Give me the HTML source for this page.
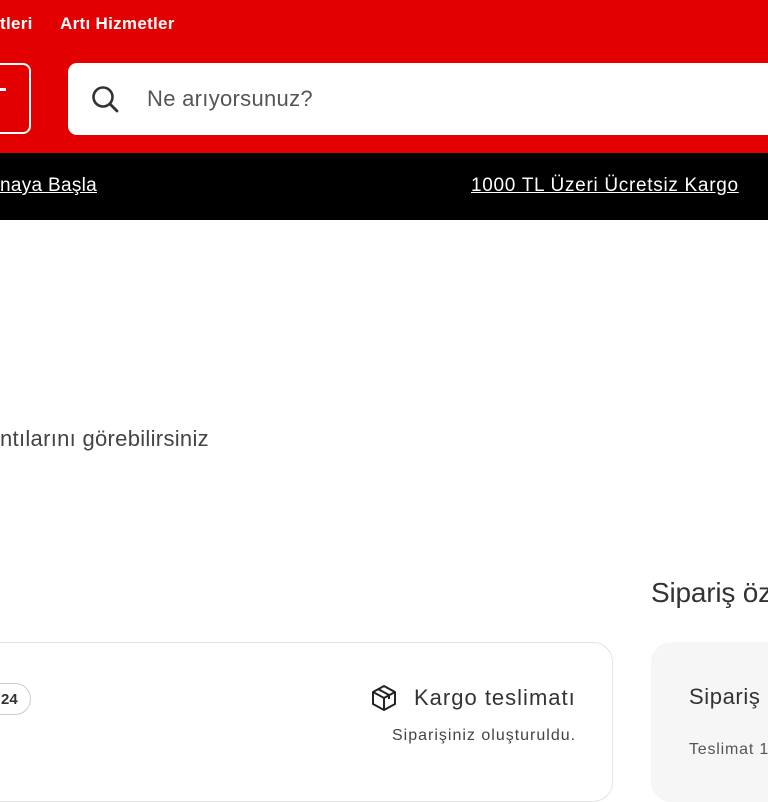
<!DOCTYPE html>
<html><head><meta charset="utf-8"><style>
*{margin:0;padding:0;box-sizing:border-box}
body{width:768px;height:768px;overflow:hidden;background:#fff;font-family:"Liberation Sans",sans-serif;position:relative}
.abs{position:absolute;white-space:nowrap}
</style></head><body>
<div class="abs" style="left:0;top:0;width:768px;height:153px;background:#e30000"></div>
<div class="abs" style="left:0;top:14px;color:#fff;font-weight:bold;font-size:17px;letter-spacing:0.3px">tleri</div>
<div class="abs" style="left:60px;top:14px;color:#fff;font-weight:bold;font-size:17px;letter-spacing:0.3px">Artı Hizmetler</div>
<div class="abs" style="left:-20px;top:63px;width:51px;height:71px;border:2px solid #fff;border-radius:8px"></div>
<div class="abs" style="left:0;top:88px;width:6px;height:3px;background:#fff"></div>
<div class="abs" style="left:68px;top:63px;width:720px;height:72px;background:#fff;border-radius:9px"></div>
<svg class="abs" style="left:89px;top:83px" width="32" height="32" viewBox="0 0 32 32"><circle cx="14" cy="14" r="9.5" fill="none" stroke="#333" stroke-width="2.6"/><path d="M21 21l7 7" stroke="#333" stroke-width="2.8" stroke-linecap="round"/></svg>
<div class="abs" style="left:147px;top:86px;color:#555;font-size:22px;letter-spacing:0.3px">Ne arıyorsunuz?</div>
<div class="abs" style="left:0;top:153px;width:768px;height:67px;background:#000"></div>
<div class="abs" style="left:0;top:175px;color:#fff;font-size:19px;text-decoration:underline;letter-spacing:0.3px">naya Başla</div>
<div class="abs" style="left:471px;top:175px;color:#fff;font-size:19px;text-decoration:underline;letter-spacing:0.7px">1000 TL Üzeri Ücretsiz Kargo</div>
<div class="abs" style="left:0;top:426px;color:#444;font-size:22px;letter-spacing:0.3px">ntılarını görebilirsiniz</div>
<div class="abs" style="left:651px;top:577px;color:#333;font-size:28px;letter-spacing:-0.2px">Sipariş öz</div>
<div class="abs" style="left:-30px;top:642px;width:643px;height:160px;border:1px solid #e3e3e3;border-radius:20px"></div>
<div class="abs" style="left:-20px;top:683px;width:51px;height:32px;border:1px solid #ccc;border-radius:16px;font-size:15px;font-weight:bold;color:#333;padding:7px 0 0 20px">24</div>
<svg class="abs" style="left:369px;top:683px" width="30" height="30" viewBox="0 0 30 30" fill="none" stroke="#222" stroke-width="2" stroke-linejoin="round"><path d="M15 3L26 9v12l-11 6-11-6V9z"/><path d="M4 9l11 6 11-6M15 15v12M9 6l11 6v4"/></svg>
<div class="abs" style="left:414px;top:685px;color:#333;font-size:22px;letter-spacing:1px">Kargo teslimatı</div>
<div class="abs" style="left:392px;top:727px;color:#444;font-size:16px;letter-spacing:1px">Siparişiniz oluşturuldu.</div>
<div class="abs" style="left:651px;top:642px;width:140px;height:160px;background:#f6f6f6;border-radius:20px"></div>
<div class="abs" style="left:689px;top:684px;color:#333;font-size:22px;letter-spacing:0.6px">Sipariş</div>
<div class="abs" style="left:689px;top:741px;color:#555;font-size:16px;letter-spacing:0.8px">Teslimat 1</div>
</body></html>
